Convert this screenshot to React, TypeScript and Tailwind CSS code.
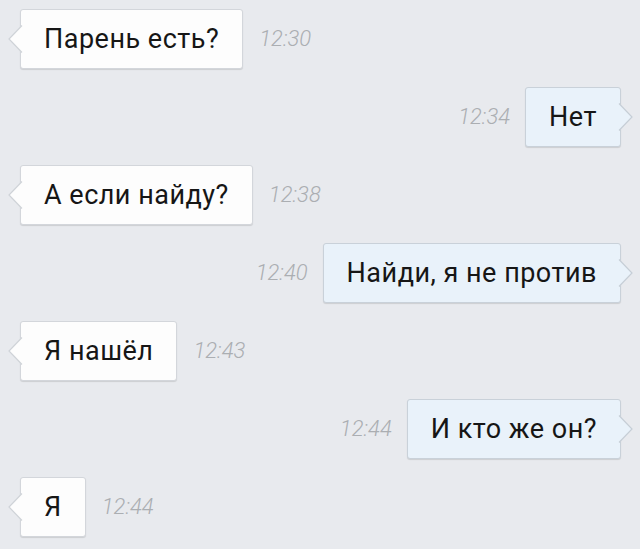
import React from "react";

type Msg = { text: string; time: string; side: "l" | "r" };

const msgs: Msg[] = [
  { text: "Парень есть?", time: "12:30", side: "l" },
  { text: "Нет", time: "12:34", side: "r" },
  { text: "А если найду?", time: "12:38", side: "l" },
  { text: "Найди, я не против", time: "12:40", side: "r" },
  { text: "Я нашёл", time: "12:43", side: "l" },
  { text: "И кто же он?", time: "12:44", side: "r" },
  { text: "Я", time: "12:44", side: "l" },
];

function Tail({ side }: { side: "l" | "r" }) {
  const fill = side === "l" ? "#fdfdfd" : "#e9f2fa";
  if (side === "l") {
    return (
      <svg
        className="absolute left-[-13px] top-1/2 -translate-y-1/2"
        width="15"
        height="28"
        viewBox="0 0 15 28"
      >
        <path d="M14 0 L1 14 L14 28 Z" fill={fill} />
        <path d="M14 0.5 L1 14 L14 27.5" fill="none" stroke="#cfd3d8" strokeWidth="1.2" />
      </svg>
    );
  }
  return (
    <svg
      className="absolute right-[-13px] top-1/2 -translate-y-1/2"
      width="15"
      height="28"
      viewBox="0 0 15 28"
    >
      <path d="M1 0 L14 14 L1 28 Z" fill={fill} />
      <path d="M1 0.5 L14 14 L1 27.5" fill="none" stroke="#c6ced6" strokeWidth="1.2" />
    </svg>
  );
}

function Bubble({ m }: { m: Msg }) {
  const isL = m.side === "l";
  return (
    <div
      className={
        "relative h-[60px] flex items-center pl-[23px] pr-[23px] rounded-[3px] border shadow-[0_1px_1px_rgba(0,0,0,0.12)] " +
        (isL ? "bg-[#fdfdfd] border-[#d3d6db]" : "bg-[#e9f2fa] border-[#c9d1d9]")
      }
    >
      <span className="text-[27px] tracking-[0.5px] text-[#161616] leading-none whitespace-nowrap">{m.text}</span>
      <Tail side={m.side} />
    </div>
  );
}

function Time({ t }: { t: string }) {
  return <span className="text-[22px] italic font-light text-[#abaeb2] leading-none">{t}</span>;
}

export default function App() {
  return (
    <div
      className="w-[640px] h-[549px] bg-[#e8eaee] overflow-hidden flex flex-col gap-[18px] pt-[9px]"
      style={{ fontFamily: "Roboto, 'Noto Sans', sans-serif" }}
    >
      {msgs.map((m, i) =>
        m.side === "l" ? (
          <div key={i} className="flex items-center pl-[20px] gap-[16px]">
            <Bubble m={m} />
            <Time t={m.time} />
          </div>
        ) : (
          <div key={i} className="flex items-center justify-end pr-[19px] gap-[15px]">
            <Time t={m.time} />
            <Bubble m={m} />
          </div>
        )
      )}
    </div>
  );
}
